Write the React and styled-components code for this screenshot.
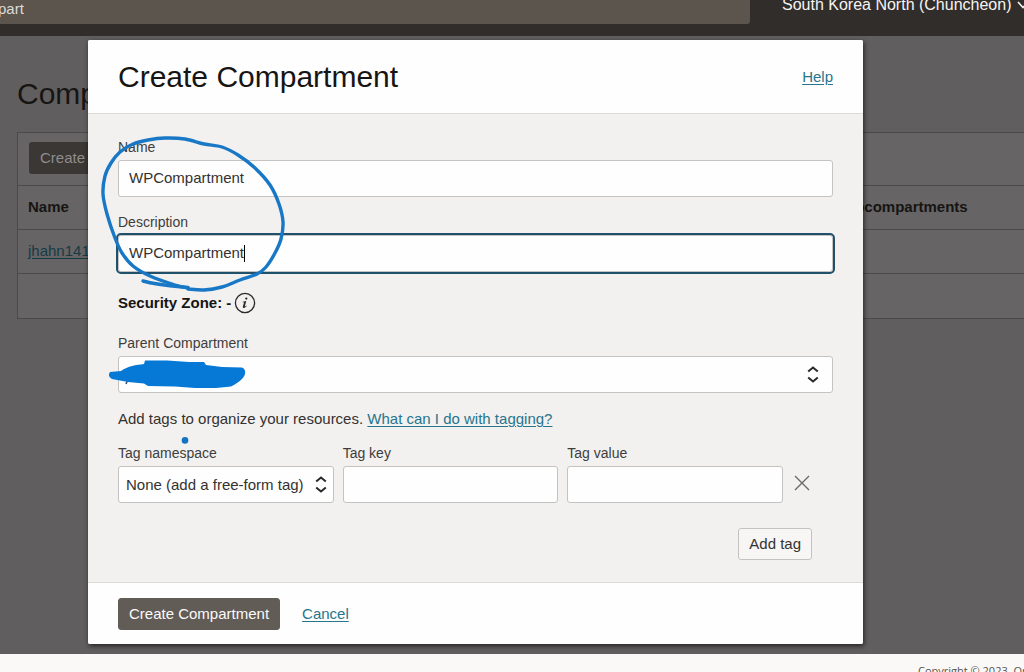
import React from "react";
import styled, { createGlobalStyle } from "styled-components";

const GlobalStyle = createGlobalStyle`
  *, *::before, *::after { box-sizing: border-box; }
  body { margin: 0; }
  body, button, input, select {
    font-family: "Liberation Sans", Arial, sans-serif;
    font-size: 15px;
    line-height: 20px;
  }
`;

const Page = styled.div`
  position: relative;
  display: flex;
  flex-direction: column;
  min-height: 100vh;
  overflow: hidden;
  background: #615e5f;
  color: #161513;
`;

const TopBar = styled.header`
  display: flex;
  align-items: flex-start;
  gap: 32px;
  flex: 0 0 36px;
  overflow: hidden;
  background: #312d2a;
`;

const Search = styled.input`
  flex: 1;
  min-width: 0;
  height: 24px;
  padding: 0 0 8px;
  border: 0;
  border-radius: 0 0 3px 0;
  background: #5b554e;
  color: #dedbd7;
  text-indent: -2px;
`;

const Region = styled.button`
  display: flex;
  align-items: center;
  gap: 6px;
  flex: 0 0 242px;
  min-width: 0;
  margin: -5px 0 0;
  padding: 0;
  border: 0;
  background: none;
  color: #f6f4f2;
  font-size: 16px;
  white-space: nowrap;

  svg { flex: none; }
`;

const Main = styled.main`
  flex: 1;
  padding: 38px 0 0 17px;
`;

const PageTitle = styled.h1`
  margin: 0 0 18px;
  font-size: 30px;
  font-weight: 400;
  line-height: 40px;
`;

const Panel = styled.section`
  border: 1px solid #4b494a;
  border-right: 0;
  background: #666465;
`;

const PanelBar = styled.div`
  padding: 9px 11px 11px;
`;

const DimButton = styled.button`
  height: 32px;
  padding: 0 11px;
  border: 0;
  border-radius: 3px;
  background: #3a3735;
  color: #8f8d8c;
  white-space: nowrap;
`;

const Table = styled.table`
  width: 100%;
  border-collapse: collapse;
  table-layout: fixed;

  th, td {
    height: 44px;
    padding: 0 10px 2px;
    border-top: 1px solid #4b494a;
    text-align: left;
  }
`;

const CountColumn = styled.col`
  width: 198px;
`;

const DimLink = styled.a`
  color: #173b45;
  text-underline-offset: 2px;
`;

const PageFooter = styled.footer`
  flex: 0 0 18px;
  height: 18px;
  padding: 8px 0 0 calc(100% - 106px);
  overflow: hidden;
  background: #faf9f8;
  color: #55524f;
  font: 11px/18px "Open Sans", "Noto Sans", sans-serif;
  white-space: nowrap;
`;

const Backdrop = styled.div`
  position: absolute;
  inset: 0;
  padding: 40px 161px 0 88px;
`;

const Dialog = styled.form`
  border-radius: 2px;
  background: #f2f1f0;
  box-shadow: 1px 2px 5px rgba(0, 0, 0, 0.65);
  overflow: hidden;
`;

const DialogHeader = styled.div`
  display: flex;
  align-items: center;
  justify-content: space-between;
  height: 74px;
  padding: 0 30px;
  border-bottom: 1px solid #dcdbda;
  background: #fefefe;
`;

const DialogTitle = styled.h2`
  margin: 0;
  font-size: 30px;
  font-weight: 400;
  line-height: 40px;
`;

const Link = styled.a`
  color: #27758c;
  text-underline-offset: 2px;
`;

const DialogBody = styled.div`
  padding: 23px 30px 22px;
`;

const Field = styled.div`
  position: relative;
  display: flex;
  flex-direction: column;
  gap: 3px;
  min-width: 0;
  margin-bottom: ${(p) => p.$gap || 0}px;
`;

const Label = styled.label`
  color: #3f3d3b;
  font-size: 14px;
`;

const TextInput = styled.input`
  width: 100%;
  height: 37px;
  padding: 0 10px 2px;
  border: 1px solid #c5c3c1;
  border-radius: 3px;
  outline: ${(p) => (p.$active ? "2px solid #20506a" : "0")};
  background: #fefefe;
  color: #343230;
`;

const Caret = styled.span`
  position: absolute;
  bottom: 10px;
  left: 126px;
  width: 1px;
  height: 17px;
  background: #000;
`;

const SelectBox = styled.div`
  position: relative;

  svg {
    position: absolute;
    top: 10px;
    right: ${(p) => p.$inset}px;
    pointer-events: none;
  }
`;

const Select = styled.select`
  display: block;
  width: 100%;
  height: 37px;
  padding: 0 24px 0 7px;
  border: 1px solid #c5c3c1;
  border-radius: 3px;
  appearance: none;
  background: #fefefe;
  color: #343230;
`;

const SecurityZone = styled.p`
  display: flex;
  align-items: center;
  gap: 3px;
  height: 22px;
  margin: 0 0 19px;
  font-weight: 700;
`;

const InfoButton = styled.button`
  display: flex;
  padding: 0;
  border: 0;
  background: none;
`;

const TagHint = styled.p`
  margin: 0 0 14px;
  color: #343230;
`;

const TagArea = styled.div`
  padding-right: 21px;
`;

const TagRow = styled.div`
  display: grid;
  grid-template-columns: repeat(3, 1fr) 20px;
  gap: 9px;
  align-items: end;
`;

const RemoveButton = styled.button`
  display: flex;
  align-items: center;
  justify-content: center;
  height: 41px;
  padding: 0;
  border: 0;
  background: none;
`;

const TagActions = styled.div`
  display: flex;
  justify-content: flex-end;
  margin-top: 25px;
`;

const Button = styled.button`
  height: 32px;
  padding: 0 10px;
  border: 1px solid ${(p) => (p.$primary ? "#625c57" : "#c5c3c1")};
  border-radius: 3px;
  background: ${(p) => (p.$primary ? "#625c57" : "#f7f6f5")};
  color: ${(p) => (p.$primary ? "#fbfaf9" : "#343230")};
  white-space: nowrap;
`;

const DialogFooter = styled.div`
  display: flex;
  align-items: center;
  gap: 22px;
  padding: 15px 30px 14px;
  border-top: 1px solid #dcdbda;
  background: #fefefe;
`;

const InkLayer = styled.svg`
  position: absolute;
  top: 0;
  left: 0;
  pointer-events: none;
`;

const UpDown = () => (
  <svg width="12" height="17" viewBox="0 0 12 17" fill="none" stroke="#2b2927" strokeWidth="2" aria-hidden="true">
    <path d="M1.2 5.6 6 1.6l4.8 4M1.2 11.4l4.8 4 4.8-4" />
  </svg>
);

const InfoIcon = () => (
  <svg width="22" height="22" viewBox="0 0 22 22" fill="none" aria-hidden="true">
    <circle cx="11" cy="11" r="9.6" stroke="#2b2927" strokeWidth="1.3" />
    <circle cx="12.3" cy="6.6" r="1.15" fill="#2b2927" />
    <path
      d="M8.700 9.700 12.300 9.100 10.800 14.200C10.700 14.700 11 14.700 12.300 13.500L12.700 13.900C11.300 15.500 10.400 15.900 9.700 15.900 8.900 15.900 8.600 15.300 8.900 14.300L9.900 10.900C10.100 10.300 9.900 10.200 8.700 10.200Z"
      fill="#2b2927"
    />
  </svg>
);

const LOOP = [
  [188, 288], [175, 285], [150, 276], [133, 266], [122, 253], [115, 238], [107, 214], [103, 194],
  [105, 176], [111, 163], [120, 152], [133, 144], [148, 140], [165, 138], [185, 139], [204, 144],
  [222, 147], [238, 155], [255, 168], [270, 185], [279, 204], [283, 222], [281, 239], [275, 253],
  [266, 267], [257, 274], [240, 280], [222, 287], [204, 290], [188, 289],
];

// Catmull-Rom spline through the pen samples, written as cubic segments.
const smooth = (pts) =>
  pts.slice(0, -1).reduce((d, p, i) => {
    const a = pts[i - 1] || p;
    const q = pts[i + 1];
    const b = pts[i + 2] || q;
    const c1 = [p[0] + (q[0] - a[0]) / 6, p[1] + (q[1] - a[1]) / 6];
    const c2 = [q[0] - (b[0] - p[0]) / 6, q[1] - (b[1] - p[1]) / 6];
    return `${d}C${c1} ${c2} ${q}`;
  }, `M${pts[0]}`);

const Ink = () => (
  <InkLayer width="300" height="460" viewBox="0 0 300 460" fill="none" aria-hidden="true">
    <g stroke="#1878c6" strokeWidth="3.4" strokeLinecap="round" strokeLinejoin="round">
      <path d={smooth(LOOP)} />
      <path d="M143 281C157 285 172 286 188 287.500" />
    </g>
    <path
      d="M110 372L121 371C128 366 136 365 144 364L145 360.5 167 360.5 189 362 204 362 206 365 222 367 242 367.5Q246 369 245 374C244 379 236 384 231 386.5L216 388H195L175 386.5 148 386 144 383.5 128 382 112 379Q107 376 110 372Z"
      fill="#0678d6"
    />
    <path d="M127 381.5l-1 2.5" stroke="#29496b" strokeWidth="1.5" />
    <circle cx="185" cy="440.4" r="3.3" fill="#1472c3" />
  </InkLayer>
);

export default function App() {
  return (
    <>
      <GlobalStyle />
      <Page>
        <TopBar>
          <Search aria-label="Search" defaultValue="part" />
          <Region type="button">
            South Korea North (Chuncheon)
            <svg width="12" height="8" viewBox="0 0 12 8" fill="none" stroke="#f6f4f2" strokeWidth="1.6" aria-hidden="true">
              <path d="M1 1l5 5.500 5-5.500" />
            </svg>
          </Region>
        </TopBar>
        <Main>
          <PageTitle>Compartments</PageTitle>
          <Panel>
            <PanelBar>
              <DimButton type="button">Create Compartment</DimButton>
            </PanelBar>
            <Table>
              <colgroup>
                <col />
                <CountColumn />
              </colgroup>
              <thead>
                <tr>
                  <th>Name</th>
                  <th>Subcompartments</th>
                </tr>
              </thead>
              <tbody>
                <tr>
                  <td><DimLink href="#">jhahn141</DimLink></td>
                  <td />
                </tr>
                <tr>
                  <td colSpan={2} />
                </tr>
              </tbody>
            </Table>
          </Panel>
        </Main>
        <PageFooter>Copyright © 2023, Oracle</PageFooter>

        <Backdrop>
          <Dialog role="dialog" aria-labelledby="dialog-title" onSubmit={(e) => e.preventDefault()}>
            <DialogHeader>
              <DialogTitle id="dialog-title">Create Compartment</DialogTitle>
              <Link href="#">Help</Link>
            </DialogHeader>
            <DialogBody>
              <Field $gap={15}>
                <Label htmlFor="name">Name</Label>
                <TextInput id="name" defaultValue="WPCompartment" />
              </Field>
              <Field $gap={20}>
                <Label htmlFor="description">Description</Label>
                <TextInput id="description" $active defaultValue="WPCompartment" />
                <Caret />
              </Field>
              <SecurityZone>
                Security Zone: -
                <InfoButton type="button" aria-label="About security zones"><InfoIcon /></InfoButton>
              </SecurityZone>
              <Field $gap={16}>
                <Label htmlFor="parent">Parent Compartment</Label>
                <SelectBox $inset={14}>
                  <Select id="parent"><option /></Select>
                  <UpDown />
                </SelectBox>
              </Field>
              <TagHint>
                Add tags to organize your resources. <Link href="#">What can I do with tagging?</Link>
              </TagHint>
              <TagArea>
                <TagRow>
                  <Field>
                    <Label htmlFor="tag-namespace">Tag namespace</Label>
                    <SelectBox $inset={7}>
                      <Select id="tag-namespace"><option>None (add a free-form tag)</option></Select>
                      <UpDown />
                    </SelectBox>
                  </Field>
                  <Field>
                    <Label htmlFor="tag-key">Tag key</Label>
                    <TextInput id="tag-key" />
                  </Field>
                  <Field>
                    <Label htmlFor="tag-value">Tag value</Label>
                    <TextInput id="tag-value" />
                  </Field>
                  <RemoveButton type="button" aria-label="Remove tag">
                    <svg width="16" height="16" viewBox="0 0 16 16" stroke="#6b6967" strokeWidth="1.4" aria-hidden="true">
                      <path d="M1 1l14 14M15 1 1 15" />
                    </svg>
                  </RemoveButton>
                </TagRow>
                <TagActions>
                  <Button type="button">Add tag</Button>
                </TagActions>
              </TagArea>
            </DialogBody>
            <DialogFooter>
              <Button $primary type="submit">Create Compartment</Button>
              <Link href="#">Cancel</Link>
            </DialogFooter>
          </Dialog>
        </Backdrop>
        <Ink />
      </Page>
    </>
  );
}
